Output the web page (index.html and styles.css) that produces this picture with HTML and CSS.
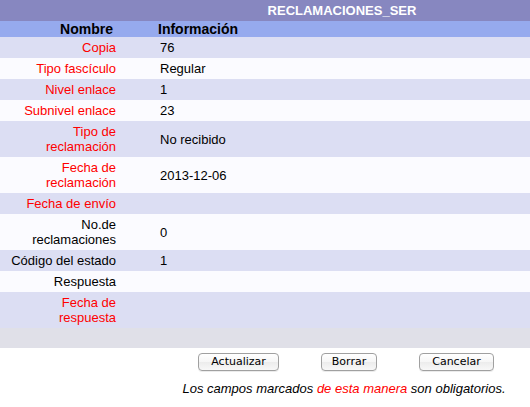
FILE: index.html
```html
<!DOCTYPE html>
<html lang="es">
<head>
<meta charset="utf-8">
<title>RECLAMACIONES_SER</title>
<link rel="stylesheet" href="styles.css">
</head>
<body>
<div class="sheet">
  <div class="row title-row">
    <div class="cell"></div>
    <div class="cell"></div>
    <div class="cell title">RECLAMACIONES_SER</div>
  </div>
  <div class="row head-row">
    <div class="cell label">Nombre</div>
    <div class="cell"></div>
    <div class="cell value">Información</div>
  </div>
  <div class="row odd"><div class="cell label req">Copia</div><div class="cell"></div><div class="cell value">76</div></div>
  <div class="row even"><div class="cell label req">Tipo fascículo</div><div class="cell"></div><div class="cell value">Regular</div></div>
  <div class="row odd"><div class="cell label req">Nivel enlace</div><div class="cell"></div><div class="cell value">1</div></div>
  <div class="row even"><div class="cell label req">Subnivel enlace</div><div class="cell"></div><div class="cell value">23</div></div>
  <div class="row odd"><div class="cell label req">Tipo de<br>reclamación</div><div class="cell"></div><div class="cell value">No recibido</div></div>
  <div class="row even"><div class="cell label req">Fecha de<br>reclamación</div><div class="cell"></div><div class="cell value">2013-12-06</div></div>
  <div class="row odd"><div class="cell label req">Fecha de envío</div><div class="cell"></div><div class="cell value"></div></div>
  <div class="row even"><div class="cell label">No.de<br>reclamaciones</div><div class="cell"></div><div class="cell value">0</div></div>
  <div class="row odd"><div class="cell label">Código del estado</div><div class="cell"></div><div class="cell value">1</div></div>
  <div class="row even"><div class="cell label">Respuesta</div><div class="cell"></div><div class="cell value"></div></div>
  <div class="row odd"><div class="cell label req">Fecha de<br>respuesta</div><div class="cell"></div><div class="cell value"></div></div>
  <div class="row foot-row"></div>
  <div class="actions">
    <div class="buttons">
      <button type="button" class="btn">Actualizar</button>
      <button type="button" class="btn btn-narrow">Borrar</button>
      <button type="button" class="btn">Cancelar</button>
    </div>
    <p class="note">Los campos marcados <span class="req">de esta manera</span> son obligatorios.</p>
  </div>
</div>
</body>
</html>
```
FILE: styles.css
```css
html, body {
  margin: 0;
  padding: 0;
  background: #ffffff;
}
body {
  font-family: "Liberation Sans", Arial, Helvetica, sans-serif;
  font-size: 13px;
  color: #000000;
}
.sheet {
  width: 530px;
}
.row {
  display: grid;
  grid-template-columns: 118px 40px 1fr;
  align-items: center;
}
.cell {
  line-height: 15px;
  padding: 3px 0;
}
.label {
  text-align: right;
  padding-right: 2px;
}
.value {
  padding-left: 2px;
}
.req {
  color: #ff0000;
}
.title-row {
  background: #8787c0;
}
.title {
  color: #ffffff;
  font-weight: bold;
  text-align: center;
  padding-right: 4px;
}
.head-row {
  background: #96aaee;
}
.head-row .cell {
  font-size: 14px;
  font-weight: bold;
  line-height: 16px;
  padding-top: 0;
  padding-bottom: 0;
}
.head-row .label {
  padding-right: 5px;
}
.head-row .value {
  padding-left: 0;
}
.odd {
  background: #dcdef3;
}
.even {
  background: #fbfbff;
}
.foot-row {
  background: #e0e0e8;
  height: 20px;
}
.actions {
  padding-left: 160px;
  padding-top: 5px;
}
.buttons {
  display: flex;
  justify-content: center;
  gap: 42px;
  padding-left: 2px;
}
.btn {
  box-sizing: border-box;
  height: 18px;
  padding: 0 12px;
  font-family: "DejaVu Sans", "Liberation Sans", sans-serif;
  font-size: 11px;
  line-height: 16px;
  color: #000000;
  border: 1px solid #a0a0a0;
  border-radius: 4px;
  background: linear-gradient(#ffffff, #f6f6f6 50%, #ececec 51%, #f8f8f8);
  box-shadow: 0 1px 0 rgba(0, 0, 0, 0.08);
}
.btn-narrow {
  padding: 0 10px;
}
.note {
  margin: 10px 0 0 0;
  font-style: italic;
  text-align: center;
  line-height: 15px;
  padding-right: 2px;
}
```
